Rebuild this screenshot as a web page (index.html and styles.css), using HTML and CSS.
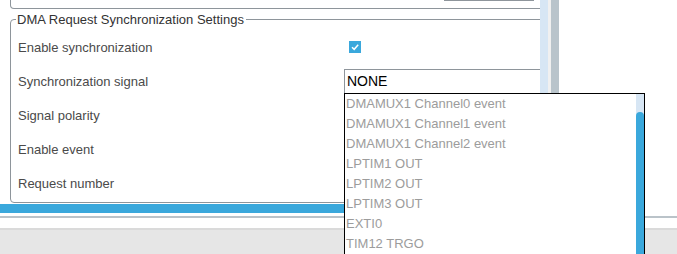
FILE: index.html
```html
<!DOCTYPE html>
<html>
<head>
<meta charset="utf-8">
<link rel="stylesheet" href="styles.css">
</head>
<body>
<div class="app">
  <div class="top">
    <div class="main">
      <div class="prev">
        <div class="prev-input"></div>
      </div>
      <fieldset class="group">
        <legend>DMA Request Synchronization Settings</legend>
        <div class="row">
          <span class="label">Enable synchronization</span>
          <span class="value"><span class="check"><svg width="12" height="12" viewBox="0 0 12 12"><path d="M3 6.2 L5.2 8.3 L9.2 3.8" fill="none" stroke="#fff" stroke-width="1.5"/></svg></span></span>
        </div>
        <div class="row">
          <span class="label">Synchronization signal</span>
          <span class="value"><span class="select">NONE</span></span>
        </div>
        <div class="row"><span class="label">Signal polarity</span></div>
        <div class="row"><span class="label">Enable event</span></div>
        <div class="row"><span class="label">Request number</span></div>
      </fieldset>
    </div>
    <div class="vscroll">
      <div class="vs-track"></div>
      <div class="vs-gap"></div>
      <div class="vs-bar"></div>
    </div>
    <div class="side"></div>
  </div>
  <div class="hbar"></div>
  <div class="hgap"></div>
  <div class="hline"></div>
  <div class="hwhite"></div>
  <div class="status"></div>

  <div class="popup">
    <ul class="options">
      <li>DMAMUX1 Channel0 event</li>
      <li>DMAMUX1 Channel1 event</li>
      <li>DMAMUX1 Channel2 event</li>
      <li>LPTIM1 OUT</li>
      <li>LPTIM2 OUT</li>
      <li>LPTIM3 OUT</li>
      <li>EXTI0</li>
      <li>TIM12 TRGO</li>
    </ul>
    <div class="pscroll"><div class="pthumb"></div></div>
  </div>
</div>
</body>
</html>
```
FILE: styles.css
```css
* { box-sizing: border-box; }
html, body { margin: 0; padding: 0; background: #fff; }
body { font-family: "Liberation Sans", Arial, sans-serif; font-size: 13px; }
.app { position: relative; width: 677px; height: 254px; overflow: hidden; background: #fff; }
.top { display: flex; height: 204px; }
.main { width: 540px; position: relative; overflow: hidden; }
.prev { height: 9px; margin-left: 10px; margin-right: -20px; border: 1px solid #8e959b; border-top: none; border-radius: 0 0 4px 4px; position: relative; }
.prev-input { position: absolute; left: 433px; top: -1px; width: 90px; height: 2px; border-bottom: 1px solid #8e959b; }
.group {
  margin: 3px -20px 0 10px;
  padding: 0 0 0 7px;
  height: 191px;
  border: 1px solid #8e959b;
  border-radius: 4px;
  min-width: 0;
}
.group legend {
  padding: 0 2px 0 1px;
  margin-left: -2px;
  color: #333;
  font-size: 13px;
  line-height: 15px;
}
.row { display: flex; align-items: center; height: 34px; }
.row:first-of-type { margin-top: 3px; }
.label { width: 326px; flex-shrink: 0; color: #4a4a4a; }
.value { flex: 1; display: flex; align-items: center; min-width: 0; }
.check { display: block; width: 12px; height: 12px; margin-left: 5px; background: #3aa8dc; }
.check svg { display: block; }
.select { display: block; flex: 1; height: 25px; line-height: 23px; border: 1px solid #8e959b; padding-left: 2px; color: #000; font-size: 14px; }
.vscroll { display: flex; width: 19px; }
.vs-track { width: 8px; background: #d7e6f4; }
.vs-gap { width: 3px; background: #f0f0f0; }
.vs-bar { width: 8px; background: #b9c4cb; }
.side { flex: 1; }
.hbar { height: 9px; width: 559px; background: #3aa8dc; }
.hgap { height: 3px; }
.hline { height: 2px; background: #bac3c9; }
.hwhite { height: 10px; }
.status { height: 26px; background: #e6e6e6; border-top: 2px solid #dadada; }
.popup {
  position: absolute;
  left: 344px; top: 93px;
  width: 301px; height: 180px;
  border: 1px solid #000;
  background: #fff;
  display: flex;
}
.options { list-style: none; margin: 0; padding: 0; flex: 1; }
.options li { height: 20px; line-height: 20px; padding-left: 1px; color: #9c9c9c; font-size: 13px; white-space: nowrap; }
.pscroll { width: 8px; background: #d7e6f4; padding-top: 18px; }
.pthumb { height: 200px; background: #3aa8dc; border-radius: 4px; }
```
